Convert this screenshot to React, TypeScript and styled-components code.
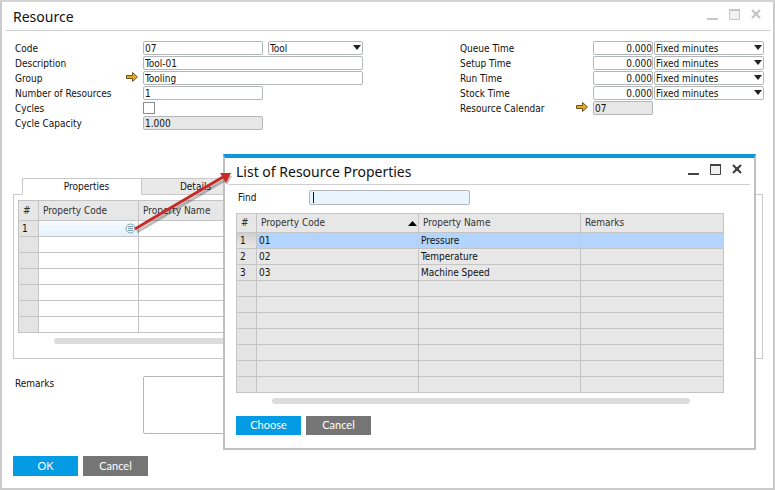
import React from "react";
import styled, { createGlobalStyle, css } from "styled-components";

const GlobalStyle = createGlobalStyle`
  *, *::before, *::after { box-sizing: border-box; }
  body {
    margin: 0;
    background: #d3d3d3;
    color: #111;
    font-family: "DejaVu Sans Condensed", "DejaVu Sans", sans-serif;
    font-stretch: condensed;
    font-size: 10px;
    line-height: 14px;
  }
  button, input, select, textarea { font: inherit; color: inherit; margin: 0; }
`;

const Window = styled.main`
  position: relative;
  display: flex;
  flex-direction: column;
  min-height: 100vh;
  padding: 0 10px 12px 11px;
  background: #fff;
  border: 2px solid #cbcbcb;
  border-top-color: #d3d3d3;
`;

const TitleBar = styled.header<{ $compact?: boolean }>`
  display: flex;
  align-items: center;
  justify-content: space-between;
  height: ${(p) => (p.$compact ? 27 : 29)}px;
  margin: ${(p) => (p.$compact ? "0 -26px 0 -7px" : "0 -7px")};
  padding: ${(p) => (p.$compact ? "0 6px 0 7px" : "0 7px")};
  border-bottom: 1px solid #cfcfcf;
`;

const Title = styled.h1`
  margin: 0;
  padding-top: 2px;
  font-family: "Noto Sans", sans-serif;
  font-size: 14px;
  font-stretch: normal;
  font-weight: 400;
  line-height: 20px;
`;

const WindowControls = styled.div<{ $muted?: boolean }>`
  display: flex;
  gap: 10px;
  padding-bottom: 2px;
  color: ${(p) => (p.$muted ? "#c6c6c6" : "#444")};
`;

const IconButton = styled.button`
  display: flex;
  width: 12px;
  height: 12px;
  padding: 0;
  border: 0;
  background: none;
`;

const FormArea = styled.section`
  display: flex;
  justify-content: space-between;
  margin-right: -1px;
  padding: 10px 0 0 2px;
`;

const FieldColumn = styled.div``;

const Field = styled.div`
  display: flex;
  height: 15px;
`;

const LinkSlot = styled.div`
  width: 17px;
  padding-top: 1px;
`;

const Label = styled.label<{ $width: number }>`
  width: ${(p) => p.$width}px;
  padding-top: 1px;
  white-space: nowrap;
`;

const TextInput = styled.input<{ $width: number; $numeric?: boolean }>`
  width: ${(p) => p.$width}px;
  height: 14px;
  padding: 1px 1px 0;
  border: 1px solid #b4b7ba;
  border-radius: 2px;
  background: #fff;
  outline: none;
  text-align: ${(p) => (p.$numeric ? "right" : "left")};
  &:read-only { background: #e7e7e7; }
  ${(p) => p.$numeric && css`padding-right: 0;`}
`;

const Checkbox = styled.input`
  appearance: none;
  width: 12px;
  height: 12px;
  margin-top: 1px;
  border: 1px solid #8c8c8c;
  background: #fff;
  &:checked { background: #0a99e0; }
`;

const SelectBox = styled.div<{ $width: number; $gap: number }>`
  position: relative;
  width: ${(p) => p.$width}px;
  margin-left: ${(p) => p.$gap}px;
`;

const Select = styled.select`
  appearance: none;
  display: block;
  width: 100%;
  height: 14px;
  padding: 0 12px 0 1px;
  border: 1px solid #b4b7ba;
  border-radius: 2px;
  background: #fff;
  outline: none;
`;

const Caret = styled.svg`
  position: absolute;
  top: 4px;
  right: 2px;
  pointer-events: none;
`;

const Tabs = styled.div`
  display: flex;
  margin: 47px 0 -1px 9px;
  z-index: 1;
`;

const Tab = styled.button<{ $active?: boolean }>`
  width: ${(p) => (p.$active ? 120 : 108)}px;
  height: 17px;
  padding: ${(p) => (p.$active ? "0 0 0 9px" : "0")};
  border: 1px solid #c8c8c8;
  border-bottom-color: ${(p) => (p.$active ? "#fff" : "#c8c8c8")};
  border-left-width: ${(p) => (p.$active ? 1 : 0)}px;
  background: ${(p) => (p.$active ? "#fff" : "#e9e9e9")};
  line-height: 15px;
`;

const Panel = styled.section`
  padding: 5px 20px 14px 4px;
  border: 1px solid #c8c8c8;
`;

const Table = styled.table<{ $shaded?: boolean }>`
  width: 100%;
  table-layout: fixed;
  border-collapse: separate;
  border-spacing: 0;
  border: 1px solid #c4c4c4;
  border-width: 1px 0 0 1px;
  background: ${(p) => (p.$shaded ? "#e7e7e7" : "#fff")};
`;

const HeadCell = styled.th<{ $height: number; $width?: number }>`
  width: ${(p) => (p.$width ? p.$width + "px" : "auto")};
  height: ${(p) => p.$height}px;
  padding: 0 4px;
  border: 1px solid #c4c4c4;
  border-width: 0 1px 1px 0;
  background: #e7e7e7;
  color: #333;
  font-weight: 400;
  line-height: 12px;
  text-align: left;
  white-space: nowrap;
`;

const NumberCell = styled.th<{ $selected?: boolean }>`
  height: 16px;
  padding: 0 3px;
  border: 1px solid #c4c4c4;
  border-width: 0 1px 1px 0;
  background: ${(p) => (p.$selected ? "linear-gradient(#cfcfcf, #e9e9e9)" : "#e4e4e4")};
  font-weight: 400;
  text-align: left;
`;

const Cell = styled.td<{ $selected?: boolean; $editing?: boolean }>`
  height: 16px;
  padding: 0 2px;
  border: 1px solid #c4c4c4;
  border-width: 0 1px 1px 0;
  ${(p) => p.$selected && css`background: #b3d4fc; border-right-color: #b7cce6;`}
  ${(p) => p.$editing && css`background: linear-gradient(#f7fbff, #e3f2fe);`}
`;

const SortHeader = styled.span`
  display: flex;
  align-items: center;
  justify-content: space-between;
  margin-right: -3px;
`;

const LookupButton = styled.button`
  display: block;
  width: 11px;
  height: 11px;
  margin: 0 0 0 auto;
  padding: 0;
  border: 0;
  background: none;
`;

const ScrollBar = styled.div`
  height: 6px;
  margin: 5px 34px 0 36px;
  border-radius: 3px;
  background: #dcdcdc;
`;

const RemarksRow = styled.div`
  display: flex;
  margin: 17px 0 22px 2px;
`;

const RemarksInput = styled.textarea`
  width: 220px;
  height: 58px;
  border: 1px solid #b4b7ba;
  border-radius: 2px;
  outline: none;
  resize: none;
`;

const Actions = styled.footer`
  display: flex;
  gap: 5px;
`;

const ActionButton = styled.button<{ $primary?: boolean; $height: number }>`
  width: 65px;
  height: ${(p) => p.$height}px;
  padding: 0 0 1px;
  border: 0;
  background: ${(p) => (p.$primary ? "#049be5" : "#757575")};
  color: #fff;
  font-family: Lato, sans-serif;
  font-size: 11px;
  font-stretch: normal;
`;

const Dialog = styled.section`
  position: absolute;
  top: 152px;
  right: 17px;
  left: 221px;
  z-index: 2;
  padding: 0 30px 13px 11px;
  border: 2px solid #c0c0c0;
  border-top: 4px solid #0f96da;
  background: #fff;
`;

const FindRow = styled.div`
  display: flex;
  margin: 5px 0 8px 2px;
`;

const FindInput = styled.input`
  width: 161px;
  height: 15px;
  padding: 0 3px;
  border: 1px solid #b4b7ba;
  border-radius: 2px;
  background: linear-gradient(#111, #111) 3px 1px / 1px 11px no-repeat #e9f5fe;
  caret-color: transparent;
  outline: none;
  &:not(:placeholder-shown) { background: #e9f5fe; caret-color: #111; }
`;

const DialogActions = styled(Actions)`
  margin-top: 12px;
`;

const Pointer = styled.svg`
  position: absolute;
  top: 163px;
  left: 124px;
  z-index: 3;
  pointer-events: none;
`;

function Controls({ muted }: { muted?: boolean }) {
  return (
    <WindowControls $muted={muted}>
      <IconButton aria-label="Minimize">
        <svg width="12" height="12"><path d="M0 9h11v2H0z" fill="currentColor" /></svg>
      </IconButton>
      <IconButton aria-label="Maximize">
        <svg width="12" height="12">
          <path d="M.5.5h10v10H.5z" fill="#f1f1f1" stroke="currentColor" />
          <path d="M0 0h11v2H0z" fill="currentColor" />
        </svg>
      </IconButton>
      <IconButton aria-label="Close">
        <svg width="12" height="12">
          <path d="M1 1l8 8M9 1l-8 8" stroke="currentColor" strokeWidth="2.2" />
          <path d="M3 3h4v4H3z" fill="currentColor" />
        </svg>
      </IconButton>
    </WindowControls>
  );
}

function LinkArrow() {
  return (
    <svg width="13" height="11" aria-hidden="true">
      <path d="M.5 3.5h6v-3l5 4.5-5 4.5v-3h-6z" fill="#e5a823" stroke="#6d5520" />
    </svg>
  );
}

function Dropdown({ value, width, gap, label }: { value: string; width: number; gap: number; label: string }) {
  return (
    <SelectBox $width={width} $gap={gap}>
      <Select aria-label={label} defaultValue={value}>
        <option>{value}</option>
      </Select>
      <Caret width="8" height="5"><path d="M0 0h8L4 5z" fill="#222" /></Caret>
    </SelectBox>
  );
}

const times = ["Queue Time", "Setup Time", "Run Time", "Stock Time"];
const properties = ["Pressure", "Temperature", "Machine Speed"];

export default function App() {
  return (
    <>
      <GlobalStyle />
      <Window>
        <TitleBar>
          <Title>Resource</Title>
          <Controls muted />
        </TitleBar>

        <FormArea>
          <FieldColumn>
            <Field>
              <Label htmlFor="code" $width={128}>Code</Label>
              <TextInput id="code" defaultValue="07" $width={120} />
              <Dropdown label="Resource type" value="Tool" width={95} gap={5} />
            </Field>
            <Field>
              <Label htmlFor="description" $width={128}>Description</Label>
              <TextInput id="description" defaultValue="Tool-01" $width={220} />
            </Field>
            <Field>
              <Label htmlFor="group" $width={111}>Group</Label>
              <LinkSlot><LinkArrow /></LinkSlot>
              <TextInput id="group" defaultValue="Tooling" $width={220} />
            </Field>
            <Field>
              <Label htmlFor="count" $width={128}>Number of Resources</Label>
              <TextInput id="count" defaultValue="1" $width={120} />
            </Field>
            <Field>
              <Label htmlFor="cycles" $width={128}>Cycles</Label>
              <Checkbox id="cycles" type="checkbox" />
            </Field>
            <Field>
              <Label htmlFor="capacity" $width={128}>Cycle Capacity</Label>
              <TextInput id="capacity" defaultValue="1.000" readOnly $width={120} />
            </Field>
          </FieldColumn>

          <FieldColumn>
            {times.map((name, i) => (
              <Field key={name}>
                <Label htmlFor={`time-${i}`} $width={133}>{name}</Label>
                <TextInput id={`time-${i}`} defaultValue="0.000" $width={60} $numeric />
                <Dropdown label={`${name} unit`} value="Fixed minutes" width={110} gap={1} />
              </Field>
            ))}
            <Field>
              <Label htmlFor="calendar" $width={116}>Resource Calendar</Label>
              <LinkSlot><LinkArrow /></LinkSlot>
              <TextInput id="calendar" defaultValue="07" readOnly $width={60} />
            </Field>
          </FieldColumn>
        </FormArea>

        <Tabs role="tablist">
          <Tab role="tab" aria-selected $active>Properties</Tab>
          <Tab role="tab" aria-selected={false}>Details</Tab>
        </Tabs>
        <Panel role="tabpanel">
          <Table>
            <thead>
              <tr>
                <HeadCell $height={20} $width={20}>#</HeadCell>
                <HeadCell $height={20} $width={100}>Property Code</HeadCell>
                <HeadCell $height={20}>Property Name</HeadCell>
              </tr>
            </thead>
            <tbody>
              {Array.from({ length: 7 }, (_, i) => (
                <tr key={i}>
                  <NumberCell scope="row">{i === 0 ? 1 : null}</NumberCell>
                  <Cell $editing={i === 0}>
                    {i === 0 && (
                      <LookupButton aria-label="Choose property">
                        <svg width="11" height="11" display="block">
                          <circle cx="5.5" cy="5.5" r="4.5" fill="#edf6fc" stroke="#8aa3b5" />
                          <path d="M3 3.5h5M3 5.5h5M3 7.5h5" stroke="#7d9bb0" />
                        </svg>
                      </LookupButton>
                    )}
                  </Cell>
                  <Cell />
                </tr>
              ))}
            </tbody>
          </Table>
          <ScrollBar />
        </Panel>

        <RemarksRow>
          <Label htmlFor="remarks" $width={128}>Remarks</Label>
          <RemarksInput id="remarks" />
        </RemarksRow>

        <Actions>
          <ActionButton $primary $height={20}>OK</ActionButton>
          <ActionButton $height={20}>Cancel</ActionButton>
        </Actions>

        <Dialog role="dialog" aria-labelledby="dialog-title">
          <TitleBar $compact>
            <Title as="h2" id="dialog-title">List of Resource Properties</Title>
            <Controls />
          </TitleBar>
          <FindRow>
            <Label htmlFor="find" $width={71}>Find</Label>
            <FindInput id="find" placeholder=" " autoFocus />
          </FindRow>
          <Table $shaded>
            <thead>
              <tr>
                <HeadCell $height={19} $width={20}>#</HeadCell>
                <HeadCell $height={19} $width={162}>
                  <SortHeader>
                    Property Code
                    <svg width="9" height="5"><path d="M0 5L4.5 0 9 5z" fill="#000" /></svg>
                  </SortHeader>
                </HeadCell>
                <HeadCell $height={19} $width={162}>Property Name</HeadCell>
                <HeadCell $height={19}>Remarks</HeadCell>
              </tr>
            </thead>
            <tbody>
              {Array.from({ length: 10 }, (_, i) => (
                <tr key={i}>
                  <NumberCell scope="row" $selected={i === 0}>{properties[i] ? i + 1 : null}</NumberCell>
                  <Cell $selected={i === 0}>{properties[i] ? `0${i + 1}` : null}</Cell>
                  <Cell $selected={i === 0}>{properties[i]}</Cell>
                  <Cell $selected={i === 0} />
                </tr>
              ))}
            </tbody>
          </Table>
          <ScrollBar />
          <DialogActions>
            <ActionButton $primary $height={19}>Choose</ActionButton>
            <ActionButton $height={19}>Cancel</ActionButton>
          </DialogActions>
        </Dialog>

        <Pointer width="112" height="80" aria-hidden="true">
          <g opacity="0.25" transform="translate(2 3)">
            <path d="M9 64L97 12" stroke="#000" strokeWidth="3" />
            <path d="M104 8L94 8l5 9z" fill="#000" />
          </g>
          <path d="M9 64L97 12" stroke="#c92a26" strokeWidth="3" />
          <path d="M105 8L94 8l6 10z" fill="#c92a26" />
        </Pointer>
      </Window>
    </>
  );
}
